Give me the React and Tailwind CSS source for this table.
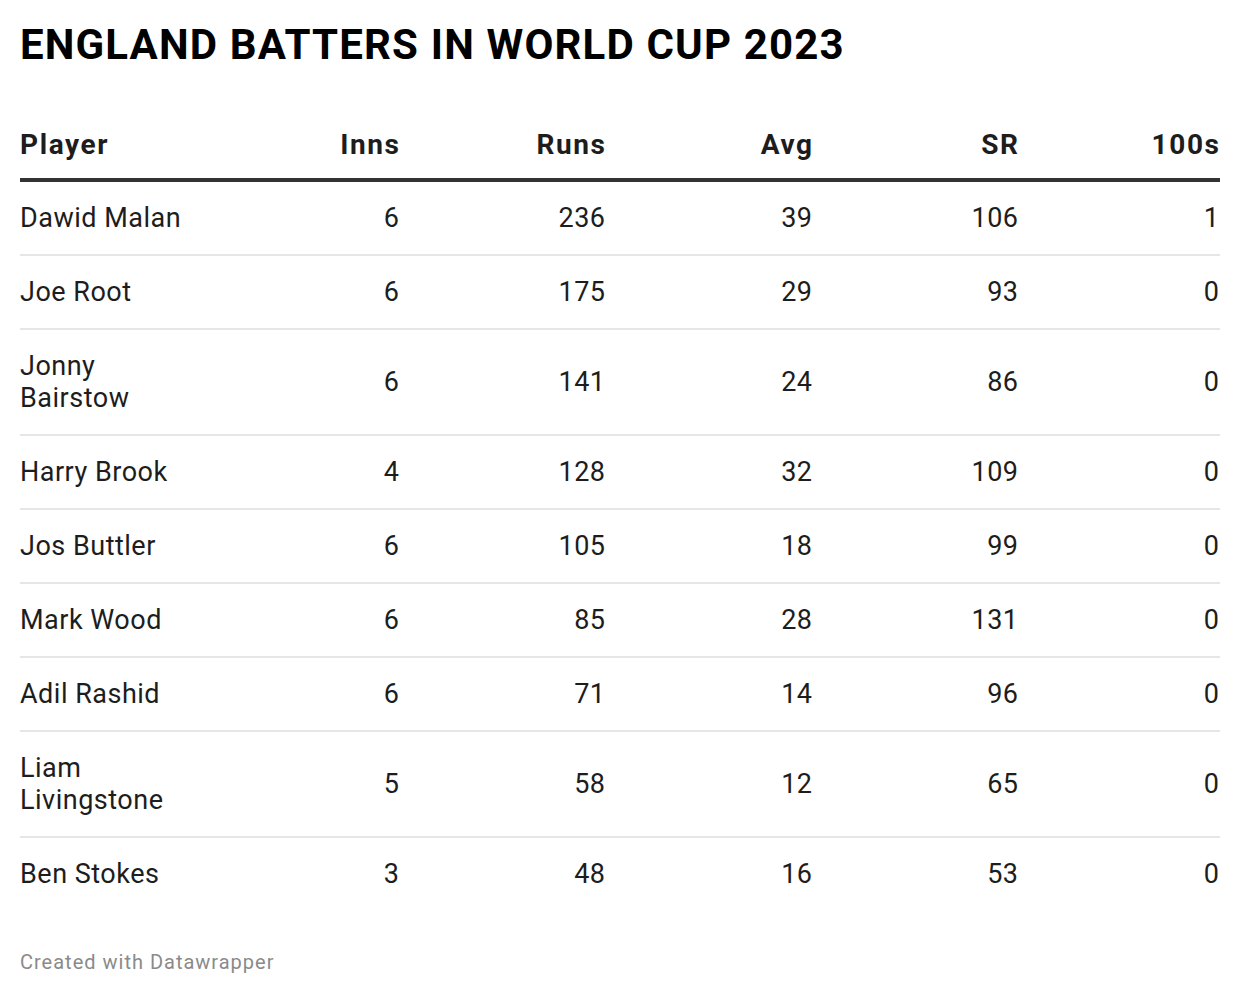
const rows = [
  { name: 'Dawid Malan', inns: 6, runs: 236, avg: 39, sr: 106, hundreds: 1 },
  { name: 'Joe Root', inns: 6, runs: 175, avg: 29, sr: 93, hundreds: 0 },
  { name: 'Jonny Bairstow', inns: 6, runs: 141, avg: 24, sr: 86, hundreds: 0 },
  { name: 'Harry Brook', inns: 4, runs: 128, avg: 32, sr: 109, hundreds: 0 },
  { name: 'Jos Buttler', inns: 6, runs: 105, avg: 18, sr: 99, hundreds: 0 },
  { name: 'Mark Wood', inns: 6, runs: 85, avg: 28, sr: 131, hundreds: 0 },
  { name: 'Adil Rashid', inns: 6, runs: 71, avg: 14, sr: 96, hundreds: 0 },
  { name: 'Liam Livingstone', inns: 5, runs: 58, avg: 12, sr: 65, hundreds: 0 },
  { name: 'Ben Stokes', inns: 3, runs: 48, avg: 16, sr: 53, hundreds: 0 },
];

const cols = 'grid grid-cols-[173px_206px_206px_207px_206px_201px] items-center';

export default function App() {
  return (
    <div
      className="min-h-screen bg-white px-[20px] pt-[21px]"
      style={{ fontFamily: 'Roboto, "Liberation Sans", sans-serif' }}
    >
      <h1 className="text-[42px] leading-[48px] font-bold tracking-[1.15px] text-black">
        ENGLAND BATTERS IN WORLD CUP 2023
      </h1>

      <div className="mt-[60px] w-[1200px]">
        {/* Header */}
        <div className={`${cols} pb-[17px] border-b-4 border-[#333333] text-[28px] leading-[32px] font-bold tracking-[1.6px] text-[#1d1d1d]`}>
          <div>Player</div>
          <div className="text-right mr-[-1.6px]">Inns</div>
          <div className="text-right mr-[-1.6px]">Runs</div>
          <div className="text-right mr-[-1.6px]">Avg</div>
          <div className="text-right mr-[-1.6px]">SR</div>
          <div className="text-right mr-[-1.6px]">100s</div>
        </div>

        {/* Body */}
        {rows.map((r, i) => (
          <div
            key={r.name}
            className={`${cols} py-[20px] text-[27px] leading-[32px] tracking-[0.5px] text-[#1d1d1d] ${
              i < rows.length - 1 ? 'border-b-2 border-[#e6e6e6]' : ''
            }`}
          >
            <div className="pr-[6px]">{r.name}</div>
            <div className="text-right mr-[-0.5px]">{r.inns}</div>
            <div className="text-right mr-[-0.5px]">{r.runs}</div>
            <div className="text-right mr-[-0.5px]">{r.avg}</div>
            <div className="text-right mr-[-0.5px]">{r.sr}</div>
            <div className="text-right mr-[-0.5px]">{r.hundreds}</div>
          </div>
        ))}
      </div>

      <div className="mt-[40px] text-[20px] leading-[24px] tracking-[1px] text-[#8a8a8a]">
        Created with Datawrapper
      </div>
    </div>
  );
}
